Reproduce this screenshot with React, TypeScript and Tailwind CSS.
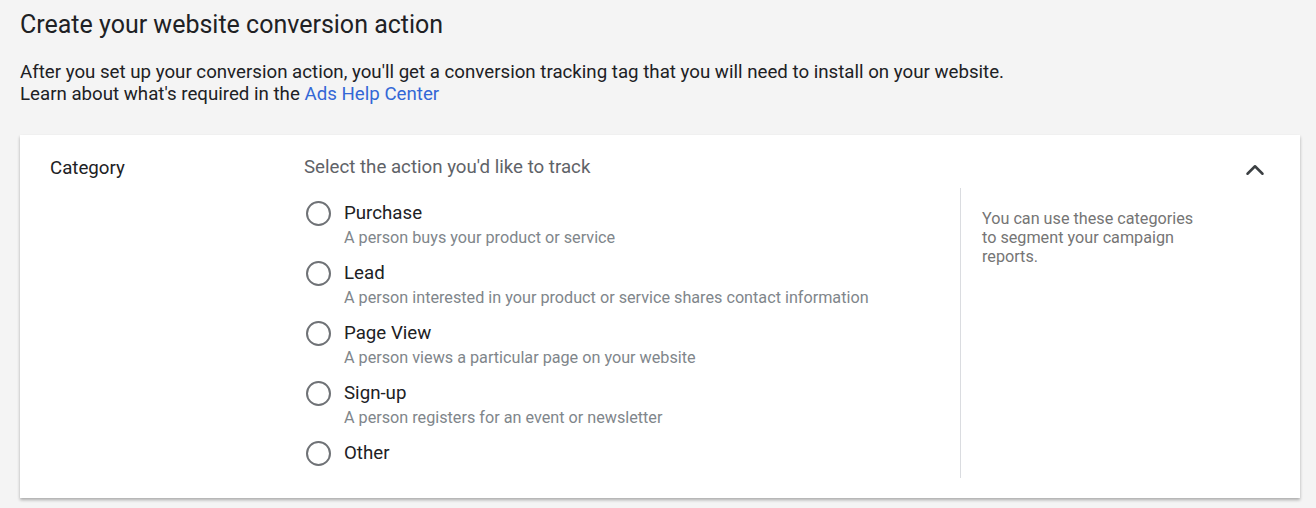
import { ChevronUp } from 'lucide-react';

const options = [
  { label: 'Purchase', desc: 'A person buys your product or service' },
  { label: 'Lead', desc: 'A person interested in your product or service shares contact information' },
  { label: 'Page View', desc: 'A person views a particular page on your website' },
  { label: 'Sign-up', desc: 'A person registers for an event or newsletter' },
  { label: 'Other', desc: '' },
];

export default function App() {
  return (
    <div className="h-[508px] w-[1316px] overflow-hidden bg-[#f4f4f4] pl-5 pr-4 pt-[9px]" style={{ fontFamily: 'Roboto, "Liberation Sans", sans-serif' }}>
      <h1 className="text-[25px] leading-[32px] text-[#202124]">Create your website conversion action</h1>
      <div className="mt-[20px] text-[18.7px] leading-[22px] text-[#202124]">
        <p>After you set up your conversion action, you'll get a conversion tracking tag that you will need to install on your website.</p>
        <p>
          Learn about what's required in the <a className="text-[#3367d6]">Ads Help Center</a>
        </p>
      </div>

      {/* Card */}
      <div className="mt-[30px] flex h-[363px] bg-white pl-[30px] shadow-[0_2px_3px_rgba(0,0,0,0.3)]">
        <div className="w-[254px] pt-[22px] text-[18.7px] leading-[22px] text-[#202124]">Category</div>
        <div className="flex flex-1 flex-col">
          <div className="flex items-start justify-between pt-[21px]">
            <div className="text-[18.7px] leading-[22px] text-[#5f6368]">Select the action you'd like to track</div>
            <ChevronUp className="mr-[30px] -mt-px h-[30px] w-[30px] text-[#3c4043]" strokeWidth={2} />
          </div>
          <div className="mt-[3px] flex">
            <div className="flex w-[656px] flex-col pt-[12px]">
              {options.map((o) => (
                <label key={o.label} className="flex h-[60px] items-start">
                  <span className="ml-[2px] mt-[1px] h-[25px] w-[25px] shrink-0 rounded-full border-2 border-[#6f7276]" />
                  <span className="ml-[13px] flex flex-col">
                    <span className="text-[18.7px] leading-[26px] text-[#202124]">{o.label}</span>
                    {o.desc && <span className="text-[16.2px] leading-[24px] text-[#80868b]">{o.desc}</span>}
                  </span>
                </label>
              ))}
            </div>
            <div className="h-[290px] border-l border-[#dadce0] pl-[21px] pt-[21px]">
              <p className="w-[220px] text-[16.2px] leading-[19px] text-[#757575]">
                You can use these categories to segment your campaign reports.
              </p>
            </div>
          </div>
        </div>
      </div>
    </div>
  );
}
